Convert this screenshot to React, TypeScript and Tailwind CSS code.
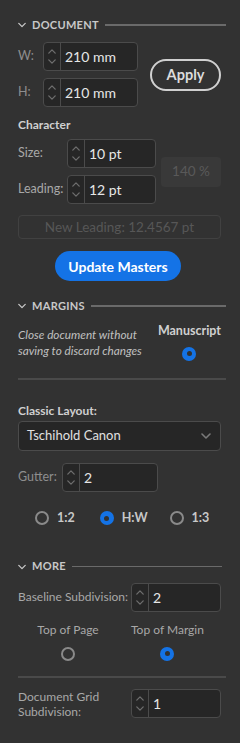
import React from "react";

const font = { fontFamily: "Lato, 'Noto Sans', sans-serif" };

function Chevron({ className = "" }: { className?: string }) {
  return (
    <svg viewBox="0 0 10 6" className={className} fill="none" stroke="currentColor" strokeWidth={1.6} strokeLinecap="round" strokeLinejoin="round">
      <path d="M1 1l4 4 4-4" />
    </svg>
  );
}

function Section({ title, lineClass = "" }: { title: string; lineClass?: string }) {
  return (
    <div className="flex items-center h-4">
      <Chevron className="w-[8px] h-[6px] text-[#c8c8c8] mr-[6px]" />
      <span className="text-[11px] font-bold tracking-[0.3px] text-[#c8c8c8]">{title}</span>
      <div className={`ml-[6px] flex-1 h-[1.5px] bg-[#6a6a6a] ${lineClass}`} />
    </div>
  );
}

function Stepper({ value, className = "" }: { value: string; className?: string }) {
  return (
    <div className={`flex h-[29px] rounded-[4px] border border-[#4b4b4b] bg-[#262626] shrink-0 ${className}`}>
      <div className="w-[17px] flex flex-col items-center justify-center gap-[5px] border-r border-[#4b4b4b] text-[#6e6e6e]">
        <Chevron className="w-[8px] h-[5px] rotate-180" />
        <Chevron className="w-[8px] h-[5px]" />
      </div>
      <div className="flex items-center pl-[4px] text-[14px] text-[#e6e6e6]">{value}</div>
    </div>
  );
}

function Radio({ checked }: { checked?: boolean }) {
  return checked ? (
    <span className="flex w-[14px] h-[14px] rounded-full bg-[#1473e6] items-center justify-center shrink-0">
      <span className="block w-[5px] h-[5px] rounded-full bg-[#323232]" />
    </span>
  ) : (
    <span className="block w-[14px] h-[14px] rounded-full border-2 border-[#8a8a8a] shrink-0" />
  );
}

export default function App() {
  return (
    <div className="w-[240px] h-[743px] bg-[#323232] text-[#c8c8c8] pl-[18px] pr-[18px] pt-[17px] overflow-hidden" style={font}>
      <Section title="DOCUMENT" lineClass="mr-[-4px]" />

      <div className="flex items-center mt-[9px]">
        <div className="flex flex-col gap-[7px]">
          <div className="flex items-center">
            <span className="w-[25px] text-[12.5px] text-[#8e8e8e]">W:</span>
            <Stepper value="210 mm" className="w-[95px]" />
          </div>
          <div className="flex items-center">
            <span className="w-[25px] text-[12.5px] text-[#8e8e8e]">H:</span>
            <Stepper value="210 mm" className="w-[95px]" />
          </div>
        </div>
        <button className="ml-auto mr-[1px] w-[71px] h-[32px] rounded-full border-2 border-[#d0d0d0] text-[14.5px] font-bold text-[#dcdcdc]">
          Apply
        </button>
      </div>

      <div className="mt-[9px] text-[12px] font-bold text-[#d0d0d0]">Character</div>

      <div className="flex items-center mt-[5px]">
        <div className="flex flex-col gap-[7px]">
          <div className="flex items-center">
            <span className="w-[49px] text-[12.5px] text-[#a8a8a8]">Size:</span>
            <Stepper value="10 pt" className="w-[89px]" />
          </div>
          <div className="flex items-center">
            <span className="w-[49px] text-[12.5px] text-[#a8a8a8]">Leading:</span>
            <Stepper value="12 pt" className="w-[89px]" />
          </div>
        </div>
        <div className="ml-auto mr-[1px] w-[60px] h-[30px] rounded-[4px] bg-[#393939] flex items-center justify-center text-[13.5px] text-[#595959]">
          140 %
        </div>
      </div>

      <div className="mt-[11px] mr-[1px] h-[24px] rounded-[4px] border border-[#414141] flex items-center justify-center text-[13.5px] text-[#575757]">
        New Leading: 12.4567 pt
      </div>

      <div className="flex justify-center mt-[12px]">
        <button className="w-[126px] h-[30px] rounded-full bg-[#1473e6] text-white text-[14px] font-bold mr-[4px]">
          Update Masters
        </button>
      </div>

      <div className="mt-[17px]">
        <Section title="MARGINS" lineClass="mr-[-4px]" />
      </div>

      <div className="flex mt-[8px]">
        <div className="italic text-[11.75px] leading-[16px] text-[#c0c0c0] pt-[5px]">
          Close document without
          <br />
          saving to discard changes
        </div>
        <div className="ml-auto flex flex-col items-center mr-[1px]">
          <span className="text-[12.5px] font-bold text-[#d0d0d0]">Manuscript</span>
          <span className="mt-[6px]">
            <Radio checked />
          </span>
        </div>
      </div>

      <div className="mt-[17px] h-[2px] bg-[#4a4a4a] mr-[-4px]" />

      <div className="mt-[22px] text-[12px] font-bold text-[#d0d0d0]">Classic Layout:</div>

      <div className="mt-[1px] mr-[1px] h-[30px] rounded-[4px] border border-[#4b4b4b] bg-[#262626] flex items-center pl-[8px] pr-[9px] text-[13px] text-[#e0e0e0]">
        Tschihold Canon
        <Chevron className="ml-auto w-[10px] h-[6px] text-[#7a7a7a]" />
      </div>

      <div className="flex items-center mt-[12px]">
        <span className="w-[44px] text-[12.5px] text-[#8e8e8e]">Gutter:</span>
        <Stepper value="2" className="w-[96px]" />
      </div>

      <div className="flex items-center mt-[17px] pl-[17px] text-[12.5px] font-bold text-[#c8c8c8]">
        <span className="flex items-center gap-[8px]">
          <Radio />
          1:2
        </span>
        <span className="flex items-center gap-[8px] ml-[25px]">
          <Radio checked />
          H:W
        </span>
        <span className="flex items-center gap-[8px] ml-[22px]">
          <Radio />
          1:3
        </span>
      </div>

      <div className="mt-[31px]">
        <Section title="MORE" />
      </div>

      <div className="flex items-center mt-[8px]">
        <span className="text-[12px] whitespace-nowrap text-[#a8a8a8]">Baseline Subdivision:</span>
        <Stepper value="2" className="ml-auto w-[90px] mr-[1px]" />
      </div>

      <div className="flex mt-[9px] text-[12px] text-[#a8a8a8]">
        <div className="w-[100px] flex flex-col items-center">
          <span>Top of Page</span>
          <span className="mt-[8px]">
            <Radio />
          </span>
        </div>
        <div className="flex flex-col items-center ml-[13px]">
          <span>Top of Margin</span>
          <span className="mt-[8px]">
            <Radio checked />
          </span>
        </div>
      </div>

      <div className="mt-[15px] h-[2px] bg-[#4a4a4a] mr-[-4px]" />

      <div className="flex items-center mt-[11px]">
        <span className="text-[12px] leading-[15px] text-[#a8a8a8]">
          Document Grid
          <br />
          Subdivision:
        </span>
        <Stepper value="1" className="ml-auto w-[90px] mr-[1px]" />
      </div>
    </div>
  );
}
